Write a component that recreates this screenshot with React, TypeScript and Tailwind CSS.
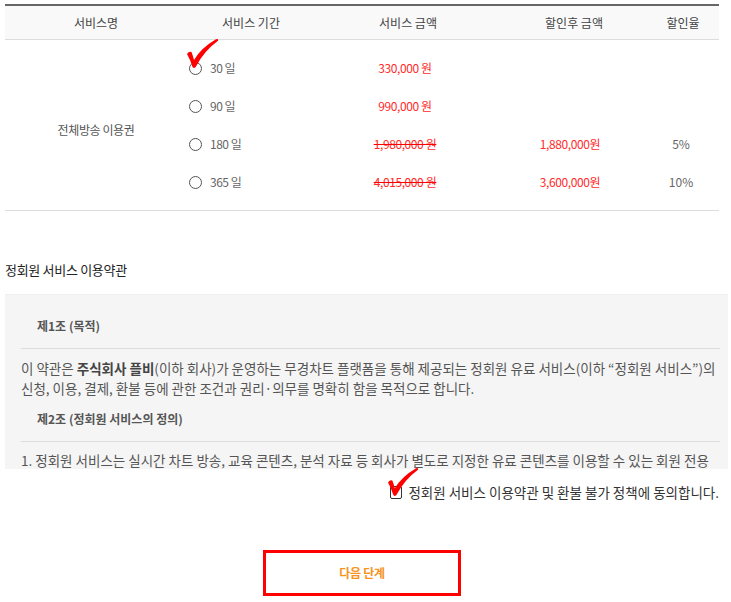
import React from 'react';

const plans = [
  { days: '30 일', price: '330,000 원', sale: '', rate: '', strike: false, checked: true },
  { days: '90 일', price: '990,000 원', sale: '', rate: '', strike: false, checked: false },
  { days: '180 일', price: '1,980,000 원', sale: '1,880,000원', rate: '5%', strike: true, checked: false },
  { days: '365 일', price: '4,015,000 원', sale: '3,600,000원', rate: '10%', strike: true, checked: false },
];

// hand drawn red tick
const RedCheck: React.FC<{ className?: string }> = ({ className }) => (
  <svg viewBox="0 0 32 30" className={className} aria-hidden="true">
    <path
      d="M0 15 Q2 12 4.5 13 Q6 17 7 21 Q14 9 29 0.3 Q31.8 -0.5 31 1.8 Q17 12 9 27.5 Q7.5 30 5.5 28 Q3 20 0 15 Z"
      fill="#f00"
    />
  </svg>
);

const App: React.FC = () => {
  return (
    <div className="w-[731px] h-[602px] bg-white pl-[5px] pr-[3px] pt-1 font-['Noto_Sans_CJK_KR','Noto_Sans',sans-serif] text-[#333] overflow-hidden">
      {/* price table */}
      <div className="mr-[9px]">
        <div className="grid grid-cols-[182px_128px_186px_146px_1fr] h-[36px] items-center border-t-2 border-b border-t-[#666] border-b-[#ddd] bg-[#f9f9f9] text-[12px] text-[#444]">
          <div className="text-center">서비스명</div>
          <div className="text-center">서비스 기간</div>
          <div className="text-center">서비스 금액</div>
          <div className="text-center">할인후 금액</div>
          <div className="text-center">할인율</div>
        </div>

        <div className="flex border-b border-[#ddd] py-[9px] text-[12px]">
          <div className="w-[182px] flex items-center justify-center pt-[10px] text-[#555] tracking-[-0.4px]">전체방송 이용권</div>
          <div className="flex-1">
            {plans.map((p) => (
              <div key={p.days} className="grid grid-cols-[142px_152px_178px_44px_1fr] h-[38px] items-center">
                <div className="relative flex items-center pl-[2px] text-[#666] tracking-[-0.5px]">
                  <span className="w-[13px] h-[13px] rounded-full border border-[#555] bg-white mr-[8px]" />
                  <span>{p.days}</span>
                  {p.checked && <RedCheck className="absolute left-0 -top-[20px] w-[32px] h-[30px]" />}
                </div>
                <div className={`text-center text-[#ff2b2b] tracking-[-0.4px] ${p.strike ? 'line-through decoration-[#f00]' : ''}`}>{p.price}</div>
                <div className="text-center text-[#ff2b2b] tracking-[-0.4px]">{p.sale}</div>
                <div className="text-center text-[#666]">{p.rate}</div>
                <div />
              </div>
            ))}
          </div>
        </div>
      </div>

      {/* terms */}
      <div className="mt-[49px] text-[13px] text-[#222] leading-[20px] tracking-[-0.3px]">정회원 서비스 이용약관</div>

      <div className="mt-[14px] h-[175px] overflow-hidden border-t border-[#eee] bg-[#f5f5f5] pl-4 pr-2 pt-[10px] text-[13.5px] text-[#555]">
        <div className="border-b border-[#ddd] pl-4 pt-[11px] pb-[12px] text-[12px] font-bold leading-[20px] text-[#555]">
          제1조 (목적)
        </div>
        <p className="pt-[10px] leading-[19.5px] whitespace-nowrap">
          이 약관은 <b className="text-[#444]">주식회사 플비</b>(이하 회사)가 운영하는 무경차트 플랫폼을 통해 제공되는 정회원 유료 서비스(이하 “정회원 서비스”)의
          <br />
          신청, 이용, 결제, 환불 등에 관한 조건과 권리·의무를 명확히 함을 목적으로 합니다.
        </p>
        <div className="border-b border-[#ddd] pl-4 pt-[11px] pb-[12px] text-[12px] font-bold leading-[20px] text-[#555]">
          제2조 (정회원 서비스의 정의)
        </div>
        <p className="pt-[9px] leading-[19.5px] whitespace-nowrap">
          1. 정회원 서비스는 실시간 차트 방송, 교육 콘텐츠, 분석 자료 등 회사가 별도로 지정한 유료 콘텐츠를 이용할 수 있는 회원 전용
        </p>
      </div>

      {/* agree */}
      <div className="mr-[9px] mt-[13px] flex justify-end">
        <label className="relative flex items-center text-[13.5px] text-[#333] leading-[20px]">
          <span className="w-[12px] h-[13px] rounded-[2px] border border-[#333] bg-white mr-[6px]" />
          정회원 서비스 이용약관 및 환불 불가 정책에 동의합니다.
          <RedCheck className="absolute -left-[2px] -top-[15px] w-[31px] h-[31px]" />
        </label>
      </div>

      {/* next */}
      <div className="mr-[9px] mt-[48px] flex justify-center">
        <button className="w-[198px] h-[46px] border-[3px] border-[#f00] bg-white text-[12px] font-bold text-[#f7931e] tracking-[-0.3px]">
          다음 단계
        </button>
      </div>
    </div>
  );
};

export default App;
